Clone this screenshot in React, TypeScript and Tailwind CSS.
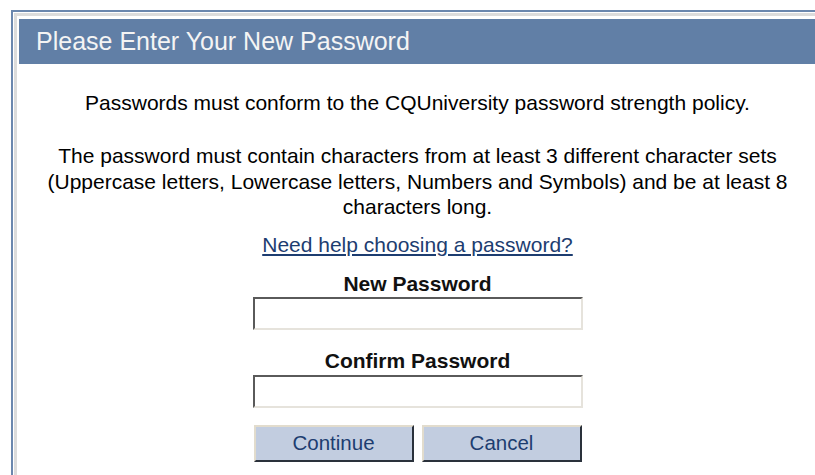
const sunkenInput =
  "block w-[330px] h-[33px] bg-white border-2 border-t-[#5a5a5a] border-l-[#5a5a5a] border-b-[#e6e3dc] border-r-[#e6e3dc] outline-none";

const raisedButton =
  "w-[160px] h-[37px] bg-[#c2cde0] text-[20.5px] text-[#1d3d70] border-2 border-t-[#e2dccd] border-l-[#e2dccd] border-b-[#2a313b] border-r-[#2a313b]";

export default function App() {
  return (
    <div className="w-[815px] h-[475px] overflow-hidden bg-white font-['Liberation_Sans',Arial,sans-serif]">
      <div className="pt-[10px] pl-[11px]">
        {/* double frame round the dialog */}
        <div className="w-[830px] border-2 border-[#6b87ae] p-px">
          <div className="min-h-[500px] border-[3px] border-[#dcdcdc] p-[2px] pt-[3px]">
            <div className="w-[797px]">
              <div className="h-[45px] bg-[#617fa6] pl-[17px] flex items-center text-[25px] text-[#f4f4f4]">
                Please Enter Your New Password
              </div>

              <div className="flex flex-col items-center text-center text-[21px] text-black pt-[26px]">
                <p className="leading-[25px]">
                  Passwords must conform to the CQUniversity password strength policy.
                </p>
                <p className="leading-[25.5px] mt-[28px] px-[10px]">
                  The password must contain characters from at least 3 different character sets
                  (Uppercase letters, Lowercase letters, Numbers and Symbols) and be at least 8
                  characters long.
                </p>
                <a href="#" className="mt-[12px] leading-[25px] text-[#1d3d70] underline">
                  Need help choosing a password?
                </a>

                <label className="mt-[13px] leading-[27px] font-bold text-[#111]">New Password</label>
                <input type="password" className={sunkenInput} />

                <label className="mt-[17px] leading-[28px] font-bold text-[#111]">Confirm Password</label>
                <input type="password" className={sunkenInput} />

                <div className="mt-[17px] flex gap-[8px]">
                  <button type="button" className={raisedButton}>
                    Continue
                  </button>
                  <button type="button" className={raisedButton}>
                    Cancel
                  </button>
                </div>
              </div>
            </div>
          </div>
        </div>
      </div>
    </div>
  );
}
